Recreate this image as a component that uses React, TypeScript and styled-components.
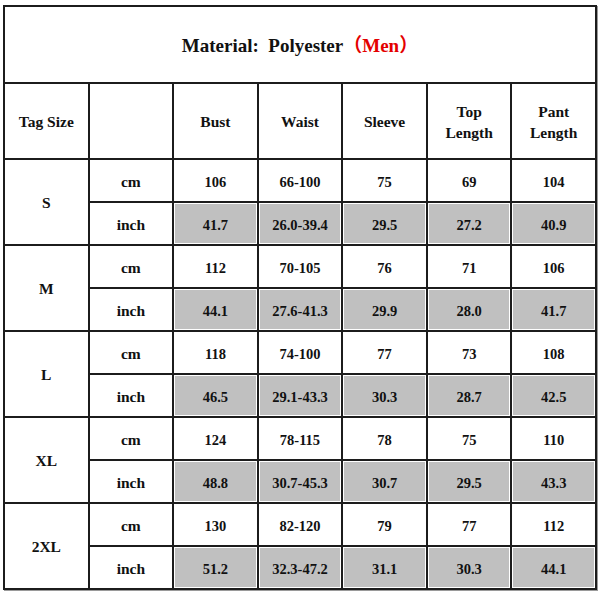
import React from "react";
import styled, { createGlobalStyle } from "styled-components";

const Global = createGlobalStyle`
  html, body { margin: 0; padding: 0; background: #ffffff; }
  body { font-family: "Liberation Serif", "Times New Roman", "Noto Sans CJK SC", serif; }
`;

const Page = styled.div`
  width: 600px;
  height: 600px;
  padding: 5px 0 0 3px;
  box-sizing: border-box;
  background: #fff;
`;

const Chart = styled.div`
  width: 594px;
  box-sizing: border-box;
  display: grid;
  grid-template-columns: repeat(7, 1fr);
  grid-template-rows: 75px 74px repeat(10, 41px);
  gap: 2px;
  padding: 2px;
  background: #1c1c1c;
  box-shadow: 1px 1px 0 #9a9a9a;
`;

const Cell = styled.div<{ $shade?: boolean; $span?: number; $cols?: number; $size?: number }>`
  grid-row: ${(p) => (p.$span ? `span ${p.$span}` : "auto")};
  grid-column: ${(p) => (p.$cols ? `span ${p.$cols}` : "auto")};
  display: flex;
  align-items: center;
  justify-content: center;
  text-align: center;
  padding-top: 3px;
  box-sizing: border-box;
  background: ${(p) => (p.$shade ? "#c0c0c0" : "#ffffff")};
  box-shadow: ${(p) => (p.$shade ? "inset 0 0 0 1px #ffffff" : "none")};
  color: #111;
  font-weight: 700;
  font-size: ${(p) => p.$size ?? 15.5}px;
  line-height: 1.3;
`;

const Title = styled.div`
  font-size: 19px;
  font-weight: 700;
  color: #111;
  white-space: pre;
`;

const Red = styled.span`
  color: #e40000;
  font-family: "Liberation Serif", "Noto Sans CJK SC", serif;
`;

const headers = ["Tag Size", "", "Bust", "Waist", "Sleeve", "Top\nLength", "Pant\nLength"];

const HeadText = styled.span`
  white-space: pre-line;
`;

const data: { size: string; cm: string[]; inch: string[] }[] = [
  { size: "S", cm: ["106", "66-100", "75", "69", "104"], inch: ["41.7", "26.0-39.4", "29.5", "27.2", "40.9"] },
  { size: "M", cm: ["112", "70-105", "76", "71", "106"], inch: ["44.1", "27.6-41.3", "29.9", "28.0", "41.7"] },
  { size: "L", cm: ["118", "74-100", "77", "73", "108"], inch: ["46.5", "29.1-43.3", "30.3", "28.7", "42.5"] },
  { size: "XL", cm: ["124", "78-115", "78", "75", "110"], inch: ["48.8", "30.7-45.3", "30.7", "29.5", "43.3"] },
  { size: "2XL", cm: ["130", "82-120", "79", "77", "112"], inch: ["51.2", "32.3-47.2", "31.1", "30.3", "44.1"] },
];

export default function App() {
  return (
    <>
      <Global />
      <Page>
        <Chart>
          <Cell $cols={7}>
            <Title>
              {"Material:  Polyester"}
              <Red>（Men）</Red>
            </Title>
          </Cell>
          {headers.map((h, i) => (
            <Cell key={i}>
              <HeadText>{h}</HeadText>
            </Cell>
          ))}
          {data.map((row) => (
            <React.Fragment key={row.size}>
              <Cell $span={2}>{row.size}</Cell>
              <Cell>cm</Cell>
              {row.cm.map((v, i) => (
                <Cell key={`c${i}`} $size={14.5}>
                  {v}
                </Cell>
              ))}
              <Cell>inch</Cell>
              {row.inch.map((v, i) => (
                <Cell key={`i${i}`} $shade $size={14.5}>
                  {v}
                </Cell>
              ))}
            </React.Fragment>
          ))}
        </Chart>
      </Page>
    </>
  );
}
